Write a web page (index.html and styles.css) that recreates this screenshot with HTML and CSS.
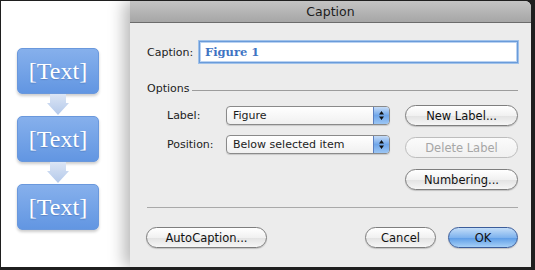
FILE: index.html
```html
<!DOCTYPE html>
<html>
<head>
<meta charset="utf-8">
<link rel="stylesheet" href="styles.css">
</head>
<body>
<div class="screen">
  <div class="doc">
    <div class="box">[Text]</div>
    <svg class="arrow" width="22" height="22" viewBox="0 0 22 22"><defs><linearGradient id="ag" x1="0" y1="0" x2="0" y2="1"><stop offset="0" stop-color="#dbe5f5"/><stop offset="1" stop-color="#b4c9ea"/></linearGradient></defs><path d="M3 0 H19 V9 H22 L11 21 L0 9 H3 Z" fill="url(#ag)"/></svg>
    <div class="box">[Text]</div>
    <svg class="arrow" width="22" height="22" viewBox="0 0 22 22"><path d="M3 0 H19 V9 H22 L11 21 L0 9 H3 Z" fill="url(#ag)"/></svg>
    <div class="box">[Text]</div>
  </div>
  <div class="dialog">
    <div class="titlebar">Caption</div>
    <div class="body">
      <div class="caption-row">
        <span class="cap-label">Caption:</span>
        <div class="field">Figure 1</div>
      </div>
      <div class="options-head"><span>Options</span><span class="rule"></span></div>
      <div class="middle">
        <div class="selects">
          <div class="sel-row">
            <span class="sel-label">Label:</span>
            <div class="select"><span class="sel-text">Figure</span><span class="stepper"><svg width="7" height="11" viewBox="0 0 7 11"><path d="M3.5 1 L6 4.5 H1 Z M3.5 10 L6 6.5 H1 Z" fill="#111"/></svg></span></div>
          </div>
          <div class="sel-row">
            <span class="sel-label">Position:</span>
            <div class="select"><span class="sel-text">Below selected item</span><span class="stepper"><svg width="7" height="11" viewBox="0 0 7 11"><path d="M3.5 1 L6 4.5 H1 Z M3.5 10 L6 6.5 H1 Z" fill="#111"/></svg></span></div>
          </div>
        </div>
        <div class="side-buttons">
          <div class="btn">New Label...</div>
          <div class="btn disabled">Delete Label</div>
          <div class="btn">Numbering...</div>
        </div>
      </div>
      <div class="separator"></div>
      <div class="footer">
        <div class="btn auto">AutoCaption...</div>
        <div class="spacer"></div>
        <div class="btn cancel">Cancel</div>
        <div class="btn ok">OK</div>
      </div>
    </div>
  </div>
</div>
</body>
</html>
```

FILE: styles.css
```css
html, body {
  margin: 0;
  padding: 0;
}
.screen {
  width: 535px;
  height: 270px;
  box-sizing: border-box;
  border-style: solid;
  border-color: #1f1f1f;
  border-width: 1px 4px 3px 1px;
  background: #1f1f1f;
  display: flex;
  overflow: hidden;
  font-family: "DejaVu Sans", "Liberation Sans", sans-serif;
}
.doc {
  width: 129px;
  flex: none;
  background: #ffffff;
  display: flex;
  flex-direction: column;
  align-items: flex-start;
  padding: 47px 0 0 16px;
  box-sizing: border-box;
}
.box {
  width: 82px;
  height: 46px;
  box-sizing: border-box;
  border-radius: 5px;
  background: linear-gradient(#86b0ec, #6296e2);
  border: 1px solid #6a98dc;
  box-shadow: 0 2px 3px rgba(0,0,0,0.2);
  color: #ffffff;
  font-family: "Liberation Serif", "DejaVu Serif", serif;
  font-size: 24px;
  display: flex;
  align-items: center;
  justify-content: center;
  text-shadow: 0 1px 1px rgba(40,70,130,0.3);
}
.arrow {
  display: block;
  margin: 0 0 0 30px;
}
.dialog {
  flex: 1;
  background: #ececec;
  display: flex;
  flex-direction: column;
  border-top-right-radius: 6px;
  box-shadow: -6px 0 16px rgba(0,0,0,0.28);
  position: relative;
  z-index: 1;
}
.titlebar {
  height: 21px;
  flex: none;
  background: linear-gradient(#c4c4c4, #a6a6a6);
  border-bottom: 1px solid #6c6c6c;
  border-top-right-radius: 6px;
  text-align: center;
  font-size: 12.5px;
  line-height: 22px;
  color: #1c1c1c;
}
.body {
  padding: 18px 13px 0 17px;
  font-size: 11px;
  color: #1c1c1c;
}
.caption-row {
  display: flex;
  align-items: center;
  height: 22px;
}
.cap-label {
  width: 52px;
  flex: none;
}
.field {
  flex: 1;
  height: 22px;
  box-sizing: border-box;
  background: #ffffff;
  border: 1px solid #6a9bd9;
  box-shadow: 0 0 0 1px #9fc1ea, inset 0 0 0 1px #b9d2f2;
  padding-left: 5px;
  font-family: "DejaVu Serif", "Liberation Serif", serif;
  font-weight: bold;
  font-size: 11.5px;
  color: #3f74c3;
  line-height: 20px;
}
.options-head {
  display: flex;
  align-items: center;
  margin-top: 18px;
  height: 14px;
  gap: 3px;
}
.options-head .rule {
  flex: 1;
  height: 1px;
  background: #9c9c9c;
  margin-top: 5px;
}
.middle {
  display: flex;
  margin-top: 10px;
}
.selects {
  padding-left: 20px;
  display: flex;
  flex-direction: column;
  gap: 10px;
  margin-top: 1px;
}
.sel-row {
  display: flex;
  align-items: center;
}
.sel-label {
  width: 59px;
  flex: none;
}
.select {
  width: 164px;
  height: 19px;
  box-sizing: border-box;
  border: 1px solid #8a8a8a;
  border-radius: 4px;
  background: linear-gradient(#ffffff, #f0f0f0);
  display: flex;
  align-items: center;
  overflow: hidden;
  box-shadow: 0 1px 1px rgba(0,0,0,0.15);
}
.sel-text {
  flex: 1;
  padding-left: 6px;
}
.stepper {
  width: 15px;
  height: 17px;
  flex: none;
  background: linear-gradient(#c6dcf7, #6fa6ea 50%, #9cc6f4);
  border-left: 1px solid #5b7fc0;
  display: flex;
  align-items: center;
  justify-content: center;
}
.stepper svg {
  display: block;
}
.side-buttons {
  margin-left: 15px;
  display: flex;
  flex-direction: column;
  gap: 11px;
  width: 113px;
}
.btn {
  height: 21px;
  box-sizing: border-box;
  border: 1px solid #7e7e7e;
  border-radius: 11px;
  background: linear-gradient(#ffffff, #f1f1f1 50%, #e2e2e2 51%, #f6f6f6);
  box-shadow: 0 1px 1px rgba(0,0,0,0.18);
  display: flex;
  align-items: center;
  justify-content: center;
  font-size: 11.5px;
  color: #111;
}
.btn.disabled {
  color: #a6a6a6;
  border-color: #bdbdbd;
  box-shadow: none;
  background: linear-gradient(#fbfbfb, #f0f0f0);
}
.separator {
  height: 1px;
  background: #a9a9a9;
  margin-top: 17px;
  margin-right: 0;
}
.footer {
  display: flex;
  margin-top: 19px;
}
.spacer {
  flex: 1;
}
.btn.auto {
  width: 121px;
  margin-left: -1px;
}
.btn.cancel {
  width: 71px;
  margin-right: 12px;
}
.btn.ok {
  width: 70px;
  border-color: #3c5d9a;
  background: linear-gradient(#c3ddf8, #7fb3ee 50%, #5b9be6 51%, #a6d0f7);
}
```
